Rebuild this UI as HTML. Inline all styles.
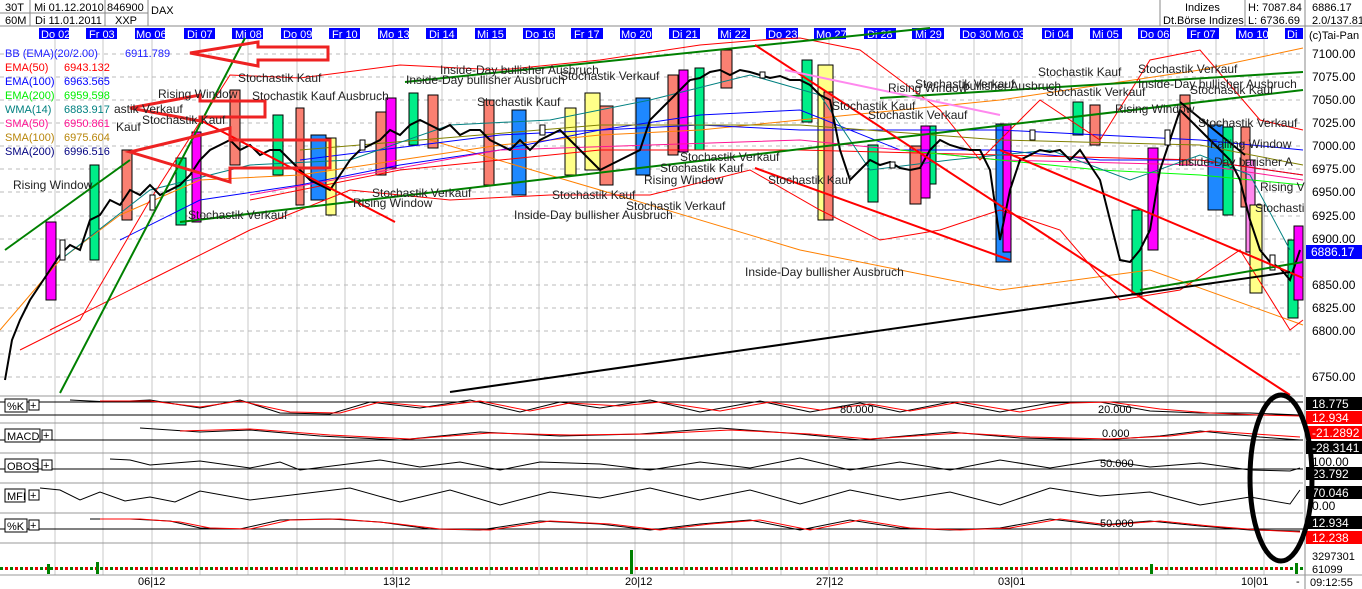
<!DOCTYPE html>
<html><head><meta charset="utf-8"><style>
html,body{margin:0;padding:0;background:#fff;width:1362px;height:589px;overflow:hidden}
svg{display:block;font-family:"Liberation Sans",sans-serif}
</style></head><body>
<svg width="1362" height="589" viewBox="0 0 1362 589" xmlns="http://www.w3.org/2000/svg">
<rect width="1362" height="589" fill="#fff"/>
<g font-size="11" fill="#000">
<line x1="0" y1="26" x2="1362" y2="26" stroke="#888"/>
<line x1="0" y1="13" x2="148" y2="13" stroke="#888"/>
<line x1="30" y1="0" x2="30" y2="26" stroke="#888"/><line x1="105" y1="0" x2="105" y2="26" stroke="#888"/><line x1="148" y1="0" x2="148" y2="26" stroke="#888"/>
<text x="5" y="11">30T</text><text x="5" y="24">60M</text>
<text x="34" y="11">Mi 01.12.2010</text><text x="35" y="24">Di 11.01.2011</text>
<text x="107" y="11">846900</text><text x="115" y="24">XXP</text>
<text x="151" y="14">DAX</text>
<line x1="1160" y1="0" x2="1160" y2="26" stroke="#888"/><line x1="1245" y1="0" x2="1245" y2="26" stroke="#888"/><line x1="1305" y1="0" x2="1305" y2="589" stroke="#888"/>
<text x="1185" y="11">Indizes</text><text x="1163" y="24">Dt.Börse Indizes</text>
<text x="1248" y="11">H: 7087.84</text><text x="1248" y="24">L: 6736.69</text>
<text x="1312" y="11">6886.17</text><text x="1312" y="24">2.0/137.81</text>
</g>
<g stroke="#c8c8c8" stroke-width="1">
<path d="M55 28V575M103 28V575M152 28V575M200 28V575M248 28V575M297 28V575M345 28V575M393 28V575M442 28V575M490 28V575M539 28V575M587 28V575M635 28V575M684 28V575M732 28V575M781 28V575M829 28V575M877 28V575M926 28V575M974 28V575M1022 28V575M1071 28V575M1119 28V575M1168 28V575M1216 28V575M1264 28V575"/>
</g>
<g stroke="#bbb" stroke-dasharray="4,4">
<path d="M0 54H1303M0 77H1303M0 100H1303M0 123H1303M0 146H1303M0 169H1303M0 192H1303M0 216H1303M0 239H1303M0 262H1303M0 285H1303M0 308H1303M0 331H1303M0 354H1303M0 377H1303"/>
</g>
<g font-size="11" fill="#fff">
<g fill="#0000ff"><rect x="39" y="28" width="30" height="11"/><rect x="86" y="28" width="31" height="11"/><rect x="135" y="28" width="30" height="11"/><rect x="184" y="28" width="31" height="11"/><rect x="232" y="28" width="31" height="11"/><rect x="281" y="28" width="31" height="11"/><rect x="329" y="28" width="31" height="11"/><rect x="378" y="28" width="31" height="11"/><rect x="426" y="28" width="31" height="11"/><rect x="475" y="28" width="31" height="11"/><rect x="523" y="28" width="32" height="11"/><rect x="571" y="28" width="32" height="11"/><rect x="620" y="28" width="32" height="11"/><rect x="669" y="28" width="31" height="11"/><rect x="718" y="28" width="32" height="11"/><rect x="766" y="28" width="32" height="11"/><rect x="814" y="28" width="32" height="11"/><rect x="864" y="28" width="32" height="11"/><rect x="912" y="28" width="32" height="11"/><rect x="960" y="28" width="63" height="11"/><rect x="1042" y="28" width="31" height="11"/><rect x="1090" y="28" width="32" height="11"/><rect x="1138" y="28" width="32" height="11"/><rect x="1187" y="28" width="32" height="11"/><rect x="1236" y="28" width="32" height="11"/><rect x="1285" y="28" width="18" height="11"/></g>
<text x="41" y="38">Do 02</text><text x="89" y="38">Fr 03</text><text x="136" y="38">Mo 06</text><text x="187" y="38">Di 07</text><text x="235" y="38">Mi 08</text><text x="283" y="38">Do 09</text><text x="332" y="38">Fr 10</text><text x="379" y="38">Mo 13</text><text x="429" y="38">Di 14</text><text x="477" y="38">Mi 15</text><text x="525" y="38">Do 16</text><text x="574" y="38">Fr 17</text><text x="621" y="38">Mo 20</text><text x="672" y="38">Di 21</text><text x="720" y="38">Mi 22</text><text x="768" y="38">Do 23</text><text x="816" y="38">Mo 27</text><text x="867" y="38">Di 28</text><text x="915" y="38">Mi 29</text><text x="962" y="38">Do 30 Mo 03</text><text x="1044" y="38">Di 04</text><text x="1092" y="38">Mi 05</text><text x="1140" y="38">Do 06</text><text x="1190" y="38">Fr 07</text><text x="1238" y="38">Mo 10</text><text x="1287" y="38">Di</text>
</g>
<g stroke="#000" stroke-width="1">
<rect x="46" y="222" width="10" height="78" fill="#ff00ff"/><rect x="90" y="165" width="9" height="95" fill="#00ee88"/><rect x="122" y="150" width="10" height="70" fill="#fa8072"/><rect x="176" y="158" width="10" height="67" fill="#00ee88"/><rect x="192" y="132" width="9" height="90" fill="#ff00ff"/><rect x="230" y="90" width="10" height="75" fill="#fa8072"/><rect x="273" y="115" width="10" height="60" fill="#00ee88"/><rect x="296" y="108" width="8" height="97" fill="#fa8072"/><rect x="311" y="135" width="15" height="65" fill="#1e88ff"/><rect x="326" y="138" width="10" height="77" fill="#ffff88"/><rect x="376" y="112" width="10" height="63" fill="#fa8072"/><rect x="386" y="98" width="10" height="70" fill="#ff00ff"/><rect x="409" y="93" width="9" height="52" fill="#00ee88"/><rect x="428" y="95" width="10" height="53" fill="#fa8072"/><rect x="484" y="100" width="10" height="85" fill="#fa8072"/><rect x="512" y="110" width="14" height="85" fill="#1e88ff"/><rect x="565" y="108" width="11" height="67" fill="#ffff88"/><rect x="585" y="93" width="15" height="77" fill="#ffff88"/><rect x="600" y="106" width="13" height="79" fill="#fa8072"/><rect x="636" y="98" width="14" height="77" fill="#1e88ff"/><rect x="668" y="75" width="10" height="80" fill="#fa8072"/><rect x="679" y="70" width="9" height="82" fill="#ff00ff"/><rect x="695" y="68" width="9" height="82" fill="#00ee88"/><rect x="721" y="50" width="11" height="38" fill="#fa8072"/><rect x="802" y="60" width="10" height="62" fill="#00ee88"/><rect x="818" y="65" width="15" height="155" fill="#ffff88"/><rect x="824" y="92" width="9" height="128" fill="#fa8072"/><rect x="868" y="145" width="10" height="57" fill="#00ee88"/><rect x="910" y="146" width="11" height="58" fill="#fa8072"/><rect x="921" y="126" width="9" height="72" fill="#ff00ff"/><rect x="930" y="126" width="6" height="58" fill="#00ee88"/><rect x="996" y="124" width="15" height="138" fill="#1e88ff"/><rect x="1003" y="124" width="8" height="128" fill="#ff00ff"/><rect x="1073" y="102" width="10" height="33" fill="#00ee88"/><rect x="1090" y="105" width="10" height="40" fill="#fa8072"/><rect x="1132" y="210" width="10" height="85" fill="#00ee88"/><rect x="1148" y="148" width="10" height="102" fill="#ff00ff"/><rect x="1180" y="95" width="10" height="70" fill="#fa8072"/><rect x="1208" y="125" width="15" height="85" fill="#1e88ff"/><rect x="1223" y="127" width="10" height="88" fill="#00ee88"/><rect x="1241" y="127" width="9" height="80" fill="#fa8072"/><rect x="1246" y="160" width="9" height="92" fill="#ff88ee"/><rect x="1250" y="205" width="12" height="88" fill="#ffff88"/><rect x="1288" y="240" width="10" height="78" fill="#00ee88"/><rect x="1294" y="226" width="9" height="74" fill="#ff00ff"/>
</g>
<g fill="none" stroke-width="1">
<polyline stroke="#ff8000" points="0,330 60,260 120,215 200,180 300,175 400,160 500,145 600,135 700,130 800,120 900,110 1000,100 1100,85 1200,70 1303,48"/>
<polyline stroke="#ff8000" points="430,140 600,190 800,250 1000,290 1150,270 1303,325"/>
<polyline stroke="#0000ff" points="120,240 200,200 300,185 400,165 500,150 600,130 700,115 800,110 900,150 1000,150 1100,160 1200,160 1303,175"/>
<polyline stroke="#0000ff" points="300,160 500,135 700,125 800,130 1000,130 1200,140 1303,150"/>
<polyline stroke="#ff0000" points="250,200 400,170 600,150 800,150 1000,155 1200,160 1303,175"/>
<polyline stroke="#ff1493" points="250,195 500,150 800,140 1000,160 1200,165 1303,180"/>
<polyline stroke="#00ff00" points="900,150 1100,170 1200,175 1303,185"/>
<polyline stroke="#808000" points="300,150 600,125 800,125 1000,140 1200,145 1303,165"/>
<polyline stroke="#008080" points="60,260 150,190 250,165 350,160 450,125 550,120 650,100 750,75 820,95 870,170 950,160 1050,150 1130,180 1200,155 1250,175 1290,250"/>
<polyline stroke="#ff0000" points="20,350 80,320 150,200 230,75 300,78 400,65 500,70 600,60 700,45 760,40 800,38 860,50 940,110 980,160 1040,100 1100,140 1150,60 1200,50 1260,120 1303,130"/>
<polyline stroke="#ff0000" points="50,330 150,280 250,230 350,190 450,200 550,195 650,195 750,170 820,210 880,240 940,230 1000,210 1060,230 1120,300 1180,290 1240,250 1290,330 1303,320"/>
</g>
<polyline fill="none" stroke="#000" stroke-width="2" points="5,380 12,340 20,320 30,300 40,285 50,270 60,255 70,245 80,250 90,220 100,215 110,200 120,205 130,190 140,195 150,185 160,195 170,190 180,185 190,175 200,160 210,150 220,145 230,140 240,150 250,145 260,155 270,150 280,150 290,160 300,170 310,180 320,185 330,190 340,175 350,160 360,150 370,145 380,140 390,130 400,135 410,125 420,120 430,125 440,130 450,125 460,135 470,130 480,130 490,140 500,145 510,150 520,140 530,150 540,140 550,135 560,130 570,140 580,150 590,160 600,170 610,165 620,160 630,155 640,150 650,120 660,110 670,100 680,90 690,80 700,78 710,72 720,70 730,75 740,70 750,72 760,75 770,78 780,76 790,80 800,80 810,85 820,95 830,100 840,150 850,180 860,170 870,160 880,165 890,162 900,168 910,170 920,168 930,150 940,140 950,145 960,148 970,150 980,150 990,170 1000,240 1010,190 1020,160 1030,155 1040,150 1050,152 1060,150 1070,160 1080,150 1090,165 1100,180 1110,220 1120,260 1130,262 1140,250 1150,230 1160,170 1170,140 1180,110 1190,120 1200,130 1210,140 1220,150 1230,160 1240,180 1250,220 1260,250 1270,262 1280,268 1290,280 1300,250"/>
<g stroke="#000" stroke-width="1" fill="#fff"><rect x="60" y="240" width="5" height="20"/><rect x="150" y="195" width="5" height="15"/><rect x="360" y="140" width="5" height="10"/><rect x="540" y="125" width="5" height="10"/><rect x="760" y="72" width="5" height="6"/><rect x="890" y="162" width="5" height="6"/><rect x="1030" y="130" width="5" height="10"/><rect x="1165" y="130" width="5" height="15"/><rect x="1270" y="255" width="5" height="15"/></g>
<g fill="none">
<line x1="60" y1="393" x2="245" y2="38" stroke="#008000" stroke-width="2"/>
<line x1="5" y1="250" x2="130" y2="160" stroke="#008000" stroke-width="2"/>
<line x1="405" y1="82" x2="930" y2="28" stroke="#008000" stroke-width="2"/>
<line x1="180" y1="222" x2="1303" y2="90" stroke="#008000" stroke-width="2"/>
<line x1="880" y1="98" x2="1303" y2="72" stroke="#008000" stroke-width="2"/>
<line x1="1140" y1="290" x2="1303" y2="262" stroke="#008000" stroke-width="2"/>
<line x1="755" y1="45" x2="1290" y2="395" stroke="#ff0000" stroke-width="2"/>
<line x1="755" y1="168" x2="1010" y2="260" stroke="#ff0000" stroke-width="2"/>
<line x1="1000" y1="150" x2="1303" y2="278" stroke="#ff0000" stroke-width="2"/>
<line x1="200" y1="120" x2="395" y2="222" stroke="#ff0000" stroke-width="2"/>
<line x1="785" y1="70" x2="1000" y2="115" stroke="#ff88ee" stroke-width="2"/>
<line x1="450" y1="392" x2="1290" y2="272" stroke="#000" stroke-width="2"/>
<line x1="1180" y1="102" x2="1245" y2="155" stroke="#000" stroke-width="2"/>
</g>
<g fill="none" stroke="#ee2222" stroke-width="3">
<polygon points="190,53 258,42 258,47 328,47 328,60 258,60 258,66"/>
<polygon points="130,108 200,95 200,101 265,101 265,117 200,117 200,121"/>
<polygon points="130,152 230,128 230,140 330,140 330,168 230,168 230,182"/>
</g>
<g font-size="11">
<text x="5" y="57" fill="#2222ff">BB (EMA)(20/2.00)</text><text x="125" y="57" fill="#2222ff">6911.789</text>
<text x="5" y="71" fill="#ff0000">EMA(50)</text><text x="64" y="71" fill="#ff0000">6943.132</text>
<text x="5" y="85" fill="#0000ff">EMA(100)</text><text x="64" y="85" fill="#0000ff">6963.565</text>
<text x="5" y="99" fill="#00ee00">EMA(200)</text><text x="64" y="99" fill="#00ee00">6959.598</text>
<text x="5" y="113" fill="#008080">WMA(14)</text><text x="64" y="113" fill="#008080">6883.917</text>
<text x="5" y="127" fill="#ff1493">SMA(50)</text><text x="64" y="127" fill="#ff1493">6950.861</text>
<text x="5" y="141" fill="#b8860b">SMA(100)</text><text x="64" y="141" fill="#b8860b">6975.604</text>
<text x="5" y="155" fill="#000080">SMA(200)</text><text x="64" y="155" fill="#000080">6996.516</text>
</g>
<g font-size="12" fill="#222">
<text x="13" y="189">Rising Window</text><text x="158" y="98">Rising Window</text><text x="238" y="82">Stochastik Kauf</text><text x="116" y="131">Kauf</text><text x="114" y="113">astik Verkauf</text><text x="142" y="124">Stochastik Kauf</text><text x="252" y="100">Stochastik Kauf Ausbruch</text><text x="188" y="219">Stochastik Verkauf</text><text x="372" y="197">Stochastik Verkauf</text><text x="353" y="207">Rising Window</text>
<text x="406" y="84">Inside-Day bullisher Ausbruch</text><text x="440" y="74">Inside-Day bullisher Ausbruch</text><text x="560" y="80">Stochastik Verkauf</text><text x="477" y="106">Stochastik Kauf</text>
<text x="552" y="199">Stochastik Kauf</text><text x="514" y="219">Inside-Day bullisher Ausbruch</text><text x="626" y="210">Stochastik Verkauf</text><text x="644" y="184">Rising Window</text><text x="660" y="172">Stochastik Kauf</text><text x="680" y="161">Stochastik Verkauf</text>
<text x="768" y="184">Stochastik Kauf</text><text x="832" y="110">Stochastik Kauf</text><text x="868" y="119">Stochastik Verkauf</text><text x="888" y="92">Rising Window</text><text x="915" y="88">Stochastik Verkauf</text><text x="745" y="276">Inside-Day bullisher Ausbruch</text>
<text x="963" y="90">bullisher Ausbruch</text><text x="1038" y="76">Stochastik Kauf</text><text x="1046" y="96">Stochastik Verkauf</text><text x="1115" y="113">Rising Window</text><text x="1138" y="73">Stochastik Verkauf</text><text x="1138" y="88">Inside-Day bullisher Ausbruch</text><text x="1190" y="94">Stochastik Kauf</text><text x="1198" y="127">Stochastik Verkauf</text><text x="1210" y="148">Falling Window</text><text x="1178" y="166">Inside-Day barisher A</text><text x="1260" y="191">Rising V</text><text x="1255" y="212">Stochasti</text>
</g>
<g font-size="12" fill="#000">
<text x="1309" y="39" font-size="11">(c)Tai-Pan</text>
<text x="1312" y="58">7100.00</text><text x="1312" y="81">7075.00</text><text x="1312" y="104">7050.00</text><text x="1312" y="127">7025.00</text><text x="1312" y="150">7000.00</text><text x="1312" y="173">6975.00</text><text x="1312" y="196">6950.00</text><text x="1312" y="220">6925.00</text><text x="1312" y="243">6900.00</text><text x="1312" y="289">6850.00</text><text x="1312" y="312">6825.00</text><text x="1312" y="335">6800.00</text><text x="1312" y="381">6750.00</text>
<rect x="1306" y="245" width="56" height="14" fill="#0000ff"/><text x="1311" y="256" fill="#fff">6886.17</text>
</g>
<g stroke="#999"><path d="M0 396H1303M0 423H1303M0 453H1303M0 483H1303M0 513H1303M0 543H1303M0 575H1362"/></g>
<g stroke="#000"><path d="M0 402H1303M0 415H1303M0 440H1303M0 469H1303M0 529H1303"/></g>
<g fill="none" stroke-width="1">
<polyline stroke="#000" points="70,400 110,402 150,400 200,408 240,400 280,413 330,414 370,402 420,408 470,400 520,412 560,402 600,408 650,400 700,412 760,401 810,412 860,403 900,412 950,402 1000,412 1050,403 1100,402 1150,411 1200,413 1250,413 1300,415"/>
<polyline stroke="#ff0000" points="100,401 150,401 200,407 240,401 290,412 340,413 380,402 430,407 480,401 530,411 570,403 620,406 660,402 720,411 770,402 820,410 870,404 910,411 960,402 1020,412 1070,403 1110,402 1160,409 1210,413 1260,415 1300,416"/>
<polyline stroke="#000" points="140,428 200,432 250,430 320,436 400,440 480,432 560,436 640,434 720,428 800,434 860,440 950,432 1020,438 1100,440 1160,436 1200,431 1260,437 1300,440"/>
<polyline stroke="#ff0000" points="180,431 250,429 330,435 410,439 490,433 570,435 650,434 730,430 810,434 870,439 960,433 1030,437 1110,439 1170,436 1210,431 1270,435 1300,437"/>
<polyline stroke="#000" points="110,459 130,460 150,465 200,461 250,468 280,462 300,470 340,465 380,460 420,467 460,462 500,470 540,462 600,464 650,470 700,462 750,468 800,458 850,470 900,462 950,470 1000,460 1050,468 1100,460 1150,467 1200,463 1250,470 1290,471 1300,468"/>
<polyline stroke="#000" points="40,488 60,490 80,500 100,492 125,501 150,497 175,502 200,491 250,500 300,494 350,488 400,502 450,490 500,505 550,492 600,498 650,488 700,500 750,490 800,504 850,490 900,500 950,492 1000,505 1050,488 1100,496 1150,492 1200,505 1250,497 1290,504 1300,490"/>
<polyline stroke="#000" points="90,519 130,519 170,521 200,528 240,529 280,520 330,519 380,522 430,529 480,530 540,521 600,524 650,530 700,524 750,520 800,530 850,520 900,528 950,530 1000,528 1050,519 1100,525 1150,521 1200,526 1250,530 1300,531"/>
<polyline stroke="#ff0000" points="100,519 140,519 180,522 210,528 250,529 290,520 340,519 390,523 440,529 490,530 550,521 610,524 660,530 710,524 760,520 810,530 860,520 910,528 960,530 1010,528 1060,519 1110,525 1160,521 1210,526 1260,530 1300,532"/>
</g>
<g font-size="11" fill="#000">
<rect x="5" y="399" width="22" height="13" fill="#fff" stroke="#000"/><text x="7" y="410">%K</text><rect x="29" y="400" width="10" height="10" fill="#fff" stroke="#000"/><text x="30" y="409">+</text>
<rect x="5" y="429" width="35" height="13" fill="#fff" stroke="#000"/><text x="7" y="440">MACD</text><rect x="42" y="430" width="10" height="10" fill="#fff" stroke="#000"/><text x="43" y="439">+</text>
<rect x="5" y="459" width="33" height="13" fill="#fff" stroke="#000"/><text x="7" y="470">OBOS</text><rect x="42" y="460" width="10" height="10" fill="#fff" stroke="#000"/><text x="43" y="469">+</text>
<rect x="5" y="489" width="20" height="13" fill="#fff" stroke="#000"/><text x="7" y="500">MFI</text><rect x="29" y="490" width="10" height="10" fill="#fff" stroke="#000"/><text x="30" y="499">+</text>
<rect x="5" y="519" width="22" height="13" fill="#fff" stroke="#000"/><text x="7" y="530">%K</text><rect x="29" y="520" width="10" height="10" fill="#fff" stroke="#000"/><text x="30" y="529">+</text>
<text x="840" y="413">80.000</text><text x="1098" y="413">20.000</text><text x="1102" y="437">0.000</text><text x="1100" y="467">50.000</text><text x="1100" y="527">50.000</text>
</g>
<g font-size="12">
<rect x="1306" y="397" width="56" height="13" fill="#000"/><text x="1312" y="408" fill="#fff">18.775</text>
<rect x="1306" y="411" width="56" height="13" fill="#f00"/><text x="1312" y="422" fill="#fff">12.934</text>
<rect x="1306" y="426" width="56" height="13" fill="#f00"/><text x="1312" y="437" fill="#fff">-21.2892</text>
<rect x="1306" y="441" width="56" height="13" fill="#000"/><text x="1312" y="452" fill="#fff">-28.3141</text>
<text x="1312" y="466" fill="#000">100.00</text>
<rect x="1306" y="467" width="56" height="13" fill="#000"/><text x="1312" y="478" fill="#fff">23.792</text>
<rect x="1306" y="486" width="56" height="13" fill="#000"/><text x="1312" y="497" fill="#fff">70.046</text>
<text x="1312" y="510" fill="#000">0.00</text>
<rect x="1306" y="516" width="56" height="13" fill="#000"/><text x="1312" y="527" fill="#fff">12.934</text>
<rect x="1306" y="531" width="56" height="13" fill="#f00"/><text x="1312" y="542" fill="#fff">12.238</text>
<text x="1312" y="560" fill="#000" font-size="11">3297301</text><text x="1312" y="573" fill="#000" font-size="11">61099</text>
<text x="1310" y="586" fill="#000" font-size="11">09:12:55</text>
</g>
<defs><pattern id="vol" x="0" y="0" width="10" height="10" patternUnits="userSpaceOnUse"><rect x="0" y="7" width="3" height="3" fill="#008000"/><rect x="5" y="7" width="3" height="3" fill="#e00"/></pattern></defs>
<rect x="0" y="564" width="1303" height="10" fill="url(#vol)"/>
<g fill="#008000"><rect x="47" y="564" width="3" height="10"/><rect x="96" y="562" width="3" height="12"/><rect x="630" y="550" width="3" height="24"/><rect x="1150" y="564" width="3" height="10"/><rect x="1295" y="563" width="3" height="11"/></g>
<ellipse cx="1281" cy="478" rx="31" ry="83" fill="none" stroke="#000" stroke-width="5"/>
<g font-size="11" fill="#000"><text x="138" y="585">06|12</text><text x="383" y="585">13|12</text><text x="625" y="585">20|12</text><text x="816" y="585">27|12</text><text x="998" y="585">03|01</text><text x="1241" y="585">10|01</text><text x="1296" y="585">-</text></g>
</svg>
</body></html>
